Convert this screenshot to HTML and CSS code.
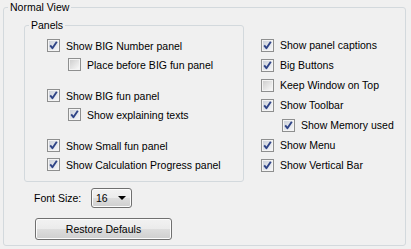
FILE: index.html
```html
<!DOCTYPE html>
<html>
<head>
<meta charset="utf-8">
<link rel="stylesheet" href="styles.css">
</head>
<body>
<svg class="defs" width="0" height="0" aria-hidden="true">
  <defs>
    <linearGradient id="gOff" x1="0" y1="0" x2="1" y2="1">
      <stop offset="0" stop-color="#cfcfcf"/>
      <stop offset="1" stop-color="#f8f8f8"/>
    </linearGradient>
    <linearGradient id="gOn" x1="0" y1="0" x2="1" y2="1">
      <stop offset="0" stop-color="#cdd2db"/>
      <stop offset="1" stop-color="#f4f5f8"/>
    </linearGradient>
    <symbol id="cbOff" viewBox="0 0 13 13">
      <rect x="0.5" y="0.5" width="12" height="12" fill="#f4f4f4" stroke="#8e8f8f"/>
      <rect x="2" y="2" width="9" height="9" fill="url(#gOff)"/>
    </symbol>
    <symbol id="cbOn" viewBox="0 0 13 13">
      <rect x="0.5" y="0.5" width="12" height="12" fill="#f4f4f4" stroke="#8e8f8f"/>
      <rect x="2" y="2" width="9" height="9" fill="url(#gOn)"/>
      <path d="M3.2 6.4 L5.4 9.2 L9.8 2.8" fill="none" stroke="#2f4487" stroke-width="1.9" stroke-linejoin="round"/>
    </symbol>
  </defs>
</svg>
<div class="page">
  <fieldset class="group outer">
    <legend class="legend">Normal View</legend>
    <div class="outer-body">
      <div class="columns">
        <fieldset class="group panels">
          <legend class="legend">Panels</legend>
          <div class="panel-body">
            <div class="cluster">
              <div class="row"><svg class="cb"><use href="#cbOn"/></svg><span>Show BIG Number panel</span></div>
              <div class="row sub"><svg class="cb"><use href="#cbOff"/></svg><span>Place before BIG fun panel</span></div>
            </div>
            <div class="cluster">
              <div class="row"><svg class="cb"><use href="#cbOn"/></svg><span>Show BIG fun panel</span></div>
              <div class="row sub"><svg class="cb"><use href="#cbOn"/></svg><span>Show explaining texts</span></div>
            </div>
            <div class="cluster">
              <div class="row"><svg class="cb"><use href="#cbOn"/></svg><span>Show Small fun panel</span></div>
              <div class="row"><svg class="cb"><use href="#cbOn"/></svg><span>Show Calculation Progress panel</span></div>
            </div>
          </div>
        </fieldset>
        <div class="right">
          <div class="row"><svg class="cb"><use href="#cbOn"/></svg><span>Show panel captions</span></div>
          <div class="row"><svg class="cb"><use href="#cbOn"/></svg><span>Big Buttons</span></div>
          <div class="row"><svg class="cb"><use href="#cbOff"/></svg><span>Keep Window on Top</span></div>
          <div class="row"><svg class="cb"><use href="#cbOn"/></svg><span>Show Toolbar</span></div>
          <div class="row sub"><svg class="cb"><use href="#cbOn"/></svg><span>Show Memory used</span></div>
          <div class="row"><svg class="cb"><use href="#cbOn"/></svg><span>Show Menu</span></div>
          <div class="row"><svg class="cb"><use href="#cbOn"/></svg><span>Show Vertical Bar</span></div>
        </div>
      </div>
      <div class="font-row">
        <span class="font-label">Font Size:</span>
        <div class="combo"><span class="combo-text">16</span><span class="arrow"></span></div>
      </div>
      <button class="btn" type="button">Restore Defauls</button>
    </div>
  </fieldset>
</div>
</body>
</html>
```

FILE: styles.css
```css
html, body {
  margin: 0;
  padding: 0;
}

body {
  width: 411px;
  height: 249px;
  overflow: hidden;
  background: #f0f0f0;
  font-family: "Liberation Sans", Arial, sans-serif;
  font-size: 10.5px;
  color: #000;
}

.defs {
  position: absolute;
  width: 0;
  height: 0;
}

.page {
  height: 249px;
  box-sizing: border-box;
  padding: 0 5px 3px 3px;
}

.group {
  margin: 0;
  padding: 0;
  min-width: 0;
  border: 1px solid #d3d9dd;
  border-radius: 3px;
}

.outer {
  height: 100%;
  box-sizing: border-box;
}

.legend {
  margin-left: 4px;
  padding: 0 2px;
  line-height: 14px;
}

.outer-body {
  padding-left: 20px;
}

.columns {
  display: flex;
  align-items: flex-start;
  margin-top: 4px;
}

.panels {
  width: 220px;
  box-sizing: border-box;
}

.panel-body {
  display: flex;
  flex-direction: column;
  gap: 12px;
  padding: 4px 0 7px 22px;
}

.cluster {
  display: flex;
  flex-direction: column;
}

.row {
  display: flex;
  align-items: center;
  gap: 6px;
  height: 19px;
  white-space: nowrap;
}

.sub {
  padding-left: 21px;
}

.cb {
  width: 13px;
  height: 13px;
  flex: none;
}

.right {
  display: flex;
  flex-direction: column;
  margin-left: 17px;
  margin-top: 17px;
}

.right .row {
  height: 20px;
}

.font-row {
  display: flex;
  align-items: center;
  margin: 6px 0 0 10px;
}

.font-label {
  width: 57px;
}

.combo {
  display: flex;
  align-items: center;
  justify-content: space-between;
  width: 41px;
  height: 20px;
  box-sizing: border-box;
  padding: 0 4px 0 4px;
  border: 1px solid #707070;
  border-radius: 3px;
  background: linear-gradient(#f2f2f2 0%, #ebebeb 50%, #dddddd 51%, #cfcfcf 100%);
  box-shadow: inset 0 0 0 1px #fcfcfc;
}

.arrow {
  width: 0;
  height: 0;
  margin-right: 1px;
  border-left: 4px solid transparent;
  border-right: 4px solid transparent;
  border-top: 4px solid #000;
}

.btn {
  display: block;
  margin: 10px 0 0 11px;
  width: 137px;
  height: 22px;
  padding: 0;
  font: inherit;
  color: #000;
  border: 1px solid #707070;
  border-radius: 3px;
  background: linear-gradient(#f2f2f2 0%, #ebebeb 50%, #dddddd 51%, #cfcfcf 100%);
  box-shadow: inset 0 0 0 1px #fcfcfc;
}
```
